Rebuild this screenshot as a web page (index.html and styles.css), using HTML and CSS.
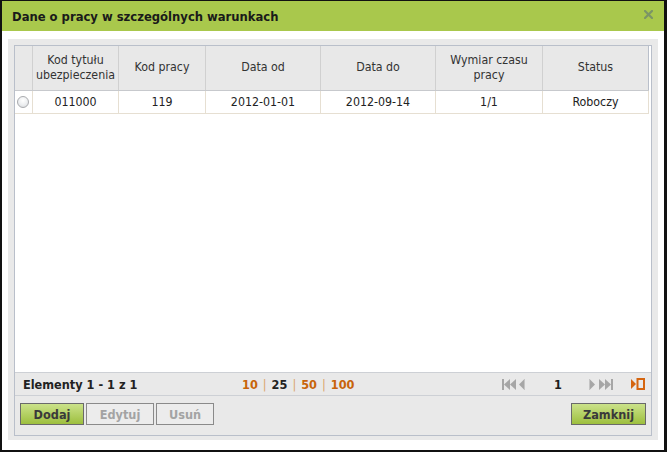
FILE: index.html
```html
<!DOCTYPE html>
<html lang="pl">
<head>
<meta charset="utf-8">
<title>Dane o pracy w szczególnych warunkach</title>
<link rel="stylesheet" href="styles.css">
</head>
<body>
<div class="window">
  <div class="titlebar">
    <span class="title">Dane o pracy w szczególnych warunkach</span>
    <span class="close"><svg width="9" height="9" viewBox="0 0 9 9"><path d="M1 1 L8 8 M8 1 L1 8" stroke="#7b9566" stroke-width="2.2" stroke-linecap="square"/></svg></span>
  </div>
  <div class="content">
    <div class="panel">
      <div class="grid">
        <div class="grid-body">
          <div class="row head">
            <div class="cell sel"></div>
            <div class="cell">Kod tytułu<br>ubezpieczenia</div>
            <div class="cell">Kod pracy</div>
            <div class="cell">Data od</div>
            <div class="cell">Data do</div>
            <div class="cell">Wymiar czasu<br>pracy</div>
            <div class="cell">Status</div>
          </div>
          <div class="row data">
            <div class="cell sel"><span class="radio"></span></div>
            <div class="cell">011000</div>
            <div class="cell">119</div>
            <div class="cell">2012-01-01</div>
            <div class="cell">2012-09-14</div>
            <div class="cell">1/1</div>
            <div class="cell">Roboczy</div>
          </div>
        </div>
        <div class="pager">
          <span class="count">Elementy 1 - 1 z 1</span>
          <span class="sizes"><span class="ps">10</span><span class="sep">|</span><span class="ps cur">25</span><span class="sep">|</span><span class="ps">50</span><span class="sep">|</span><span class="ps">100</span></span>
          <span class="nav">
            <svg class="ic first" width="14" height="11" viewBox="0 0 14 11"><rect x="0" y="0" width="2" height="11" fill="#a6a6a6"/><polygon points="2,5.5 8,0 8,11" fill="#a6a6a6"/><polygon points="8,5.5 14,0 14,11" fill="#a6a6a6"/></svg>
            <svg class="ic prev" width="6" height="11" viewBox="0 0 6 11"><polygon points="0,5.5 5,0.5 5,10.5" fill="#a6a6a6"/><rect x="5" y="0" width="1" height="11" fill="#c4c4c4"/></svg>
            <span class="page">1</span>
            <svg class="ic next" width="6" height="11" viewBox="0 0 6 11"><rect x="0" y="0" width="1" height="11" fill="#c4c4c4"/><polygon points="1,0.5 6,5.5 1,10.5" fill="#a6a6a6"/></svg>
            <svg class="ic last" width="14" height="11" viewBox="0 0 14 11"><polygon points="0,0 6,5.5 0,11" fill="#a6a6a6"/><polygon points="6,0 12,5.5 6,11" fill="#a6a6a6"/><rect x="12" y="0" width="2" height="11" fill="#a6a6a6"/></svg>
            <svg class="ic refresh" width="14" height="12" viewBox="0 0 14 12"><polygon points="0,1 5,6 0,11" fill="#d5650f"/><rect x="6.5" y="1" width="6.5" height="10" fill="none" stroke="#d5650f" stroke-width="2"/></svg>
          </span>
        </div>
        <div class="toolbar">
          <button class="btn primary b-add">Dodaj</button>
          <button class="btn disabled b-edit">Edytuj</button>
          <button class="btn disabled b-del">Usuń</button>
          <span class="spacer"></span>
          <button class="btn primary b-close">Zamknij</button>
        </div>
      </div>
    </div>
  </div>
</div>
</body>
</html>
```

FILE: styles.css
```css
* { box-sizing: border-box; }
html, body { margin: 0; padding: 0; background: #fff; }
body { font-family: "DejaVu Sans Condensed", "DejaVu Sans", sans-serif; font-size: 12.3px; color: #333; }

.window {
  width: 667px;
  height: 452px;
  border-top: 1px solid #111;
  border-left: 2px solid #111;
  border-right: 3px solid #111;
  border-bottom: 2px solid #111;
  display: flex;
  flex-direction: column;
  background: #fff;
}

.titlebar {
  height: 30px;
  flex: 0 0 30px;
  background: #a9c84c;
  display: flex;
  align-items: center;
  padding: 0 11px 0 10px;
}
.title { font-weight: bold; font-size: 12.9px; color: #1a1a1a; flex: 1; }
.close { display: flex; align-items: center; margin-top: -3px; }

.content { flex: 1; padding: 8px 6px 10px 6px; }

.panel {
  height: 401px;
  background: #e9e9e9;
  padding: 6px 6px 4px 6px;
}

.grid {
  height: 391px;
  border: 1px solid #b9bfca;
  background: #fff;
  display: flex;
  flex-direction: column;
}

.grid-body { flex: 1 1 auto; background: #fff; }

.row {
  display: grid;
  grid-template-columns: 18px 86px 87px 115px 115px 107px 106px;
  width: 634px;
}
.cell {
  border-right: 1px solid #d3d3d3;
  display: flex;
  align-items: center;
  justify-content: center;
  text-align: center;
  line-height: 15px;
}
.head { height: 45px; background: #e8e8e8; border-bottom: 1px solid #c7c9cd; }
.head .cell { color: #333; border-right-color: #d0d0d0; padding-bottom: 1px; }
.head .cell:last-child { border-right-color: #b9bfca; }
.data { height: 23px; border-bottom: 1px solid #e6dfd2; }
.data .cell { color: #222; border-right-color: #e6dfd2; }

.radio {
  width: 12px;
  height: 12px;
  border-radius: 50%;
  border: 1px solid #a9abae;
  background: radial-gradient(circle at 50% 35%, #fff 0%, #eceef0 55%, #d4d6d9 100%);
  margin-left: -2px;
}

.pager {
  flex: 0 0 24px;
  height: 24px;
  background: #e9e9e9;
  border-top: 1px solid #cdd0d5;
  border-bottom: 1px solid #cdd0d5;
  display: flex;
  align-items: center;
  padding: 0 6px 0 8px;
  font-weight: bold;
  font-size: 12.6px;
  color: #222;
}
.count { width: 219px; }
.sizes { display: flex; align-items: center; }
.ps { color: #c8640a; }
.ps.cur { color: #222; }
.sep { color: #d9a36a; font-weight: normal; margin: 0 5px; }
.nav { margin-left: auto; display: flex; align-items: center; }
.ic { display: block; }
.prev { margin-left: 3px; }
.page { width: 64px; text-align: center; color: #1d1d1d; padding-left: 2px; }
.last { margin-left: 4px; }
.refresh { margin-left: 18px; }

.toolbar {
  flex: 0 0 39px;
  height: 39px;
  background: #e9e9e9;
  display: flex;
  align-items: flex-start;
  padding: 7px 5px 0 5px;
  gap: 2px;
}
.spacer { flex: 1; }
.btn {
  height: 22px;
  font-family: "DejaVu Sans Condensed", "DejaVu Sans", sans-serif;
  font-size: 12.6px;
  font-weight: bold;
  padding: 0;
  margin: 0;
  border-radius: 0;
}
.primary {
  border: 1px solid #6a6a6a;
  background: linear-gradient(#cbe28a, #9dbf3e);
  color: #3a3a3a;
}
.disabled {
  border: 1px solid #8a8a8a;
  background: #ececec;
  color: #a3a3a3;
}
.b-add { width: 64px; }
.b-edit { width: 68px; }
.b-del { width: 58px; }
.b-close { width: 75px; }
```
